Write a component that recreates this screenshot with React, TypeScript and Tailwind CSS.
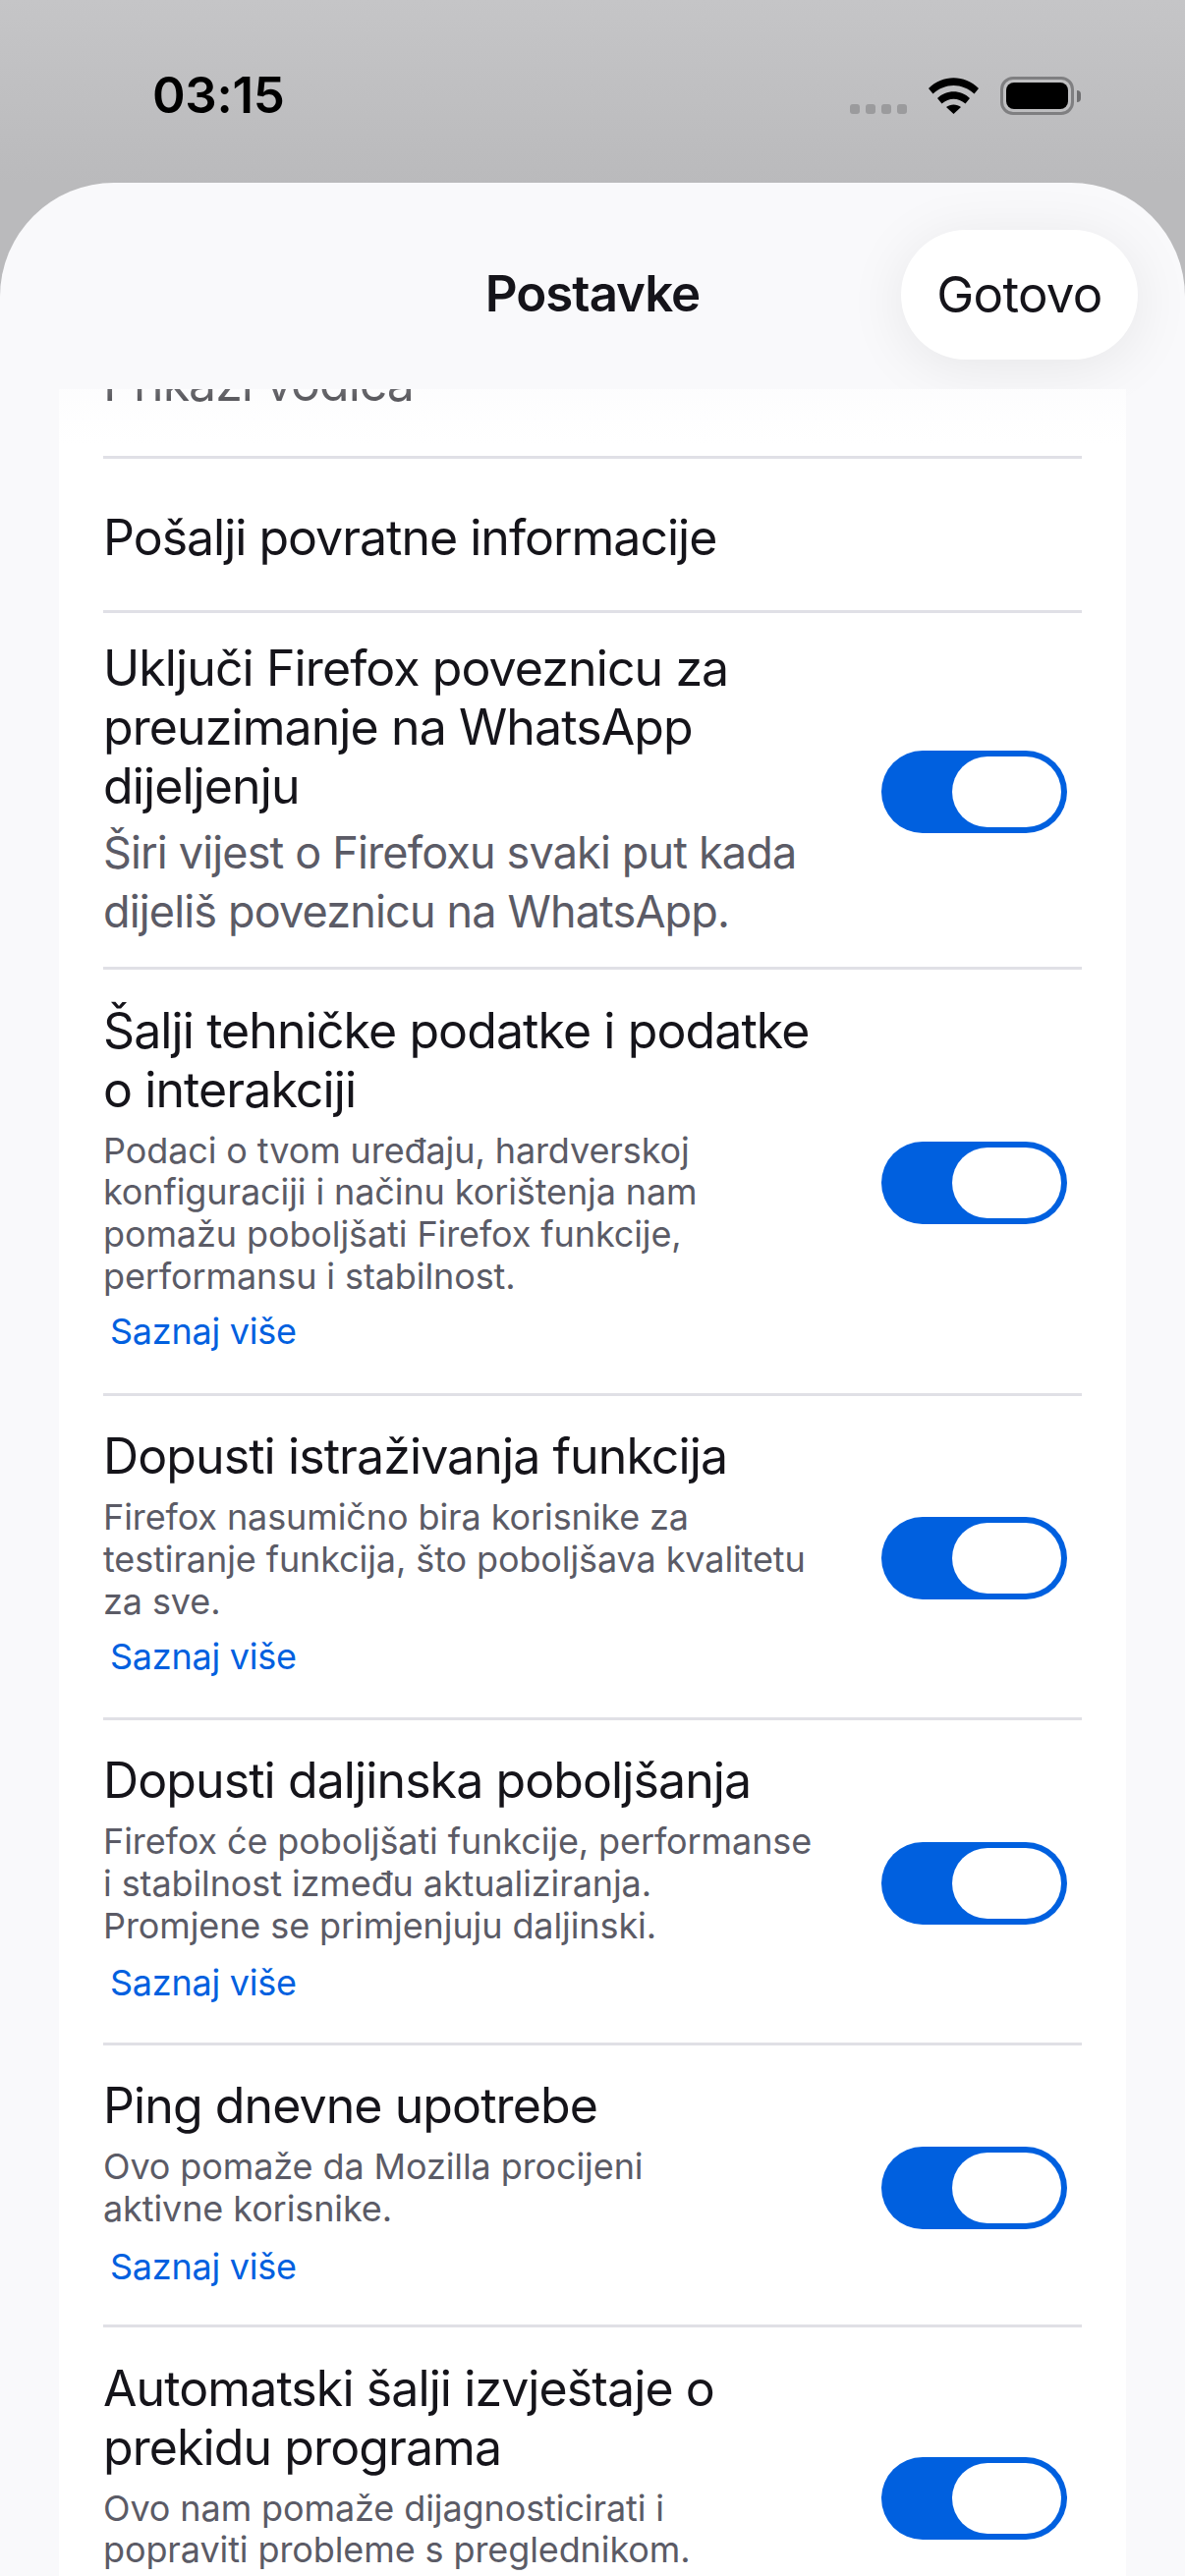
const rows = [
  {
    title: ["Uključi Firefox poveznicu za", "preuzimanje na WhatsApp", "dijeljenju"],
    large: ["Širi vijest o Firefoxu svaki put kada", "dijeliš poveznicu na WhatsApp."],
    pad: "pt-[26px] pb-[26px]",
    linkGap: "",
  },
  {
    title: ["Šalji tehničke podatke i podatke", "o interakciji"],
    sub: ["Podaci o tvom uređaju, hardverskoj", "konfiguraciji i načinu korištenja nam", "pomažu poboljšati Firefox funkcije,", "performansu i stabilnost."],
    pad: "pt-[32px] pb-[33px]",
    linkGap: "mt-[5px]",
  },
  {
    title: ["Dopusti istraživanja funkcija"],
    sub: ["Firefox nasumično bira korisnike za", "testiranje funkcija, što poboljšava kvalitetu", "za sve."],
    pad: "pt-[31px] pb-[32px]",
    linkGap: "mt-[5px]",
  },
  {
    title: ["Dopusti daljinska poboljšanja"],
    sub: ["Firefox će poboljšati funkcije, performanse", "i stabilnost između aktualiziranja.", "Promjene se primjenjuju daljinski."],
    pad: "pt-[31px] pb-[31px]",
    linkGap: "mt-[7px]",
  },
  {
    title: ["Ping dnevne upotrebe"],
    sub: ["Ovo pomaže da Mozilla procijeni", "aktivne korisnike."],
    pad: "pt-[31px] pb-[29px]",
    linkGap: "mt-[7px]",
  },
  {
    title: ["Automatski šalji izvještaje o", "prekidu programa"],
    sub: ["Ovo nam pomaže dijagnosticirati i", "popraviti probleme s preglednikom."],
    pad: "pt-[32px] pb-[34px]",
    linkGap: "mt-[5px]",
  },
];

function Lines({ lines, className }: { lines: string[]; className: string }) {
  return (
    <div className={className}>
      {lines.map((l) => (
        <div key={l} className="whitespace-nowrap">{l}</div>
      ))}
    </div>
  );
}

function Toggle() {
  return (
    <div className="mt-[4px] flex h-[84px] w-[189px] shrink-0 items-center justify-end rounded-full bg-[#0060df] pr-[6px]">
      <div className="h-[72px] w-[111px] rounded-full bg-white" />
    </div>
  );
}

function Row({ row, last }: { row: (typeof rows)[number]; last: boolean }) {
  return (
    <div className="mx-[45px] flex flex-col">
      <div className={`flex items-center justify-between pr-[15px] ${row.pad}`}>
        <div className="flex flex-col">
          <Lines lines={row.title} className="text-[50px] leading-[60px] tracking-[-0.9px] text-[#15141a]" />
          {row.large && <Lines lines={row.large} className="mt-[8px] text-[45px] leading-[60px] tracking-[-0.85px] text-[#5b5b66]" />}
          {row.sub && <Lines lines={row.sub} className="mt-[11px] text-[36px] leading-[42.67px] tracking-[-0.1px] text-[#5b5b66]" />}
          {row.sub && <div className={`${row.linkGap} pl-[7px] text-[36px] leading-[60px] tracking-[-0.25px] text-[#0060df]`}>Saznaj više</div>}
        </div>
        <Toggle />
      </div>
      {!last && <div className="h-[3px] bg-[#e0e0e6]" />}
    </div>
  );
}

export default function App() {
  return (
    <div className="flex h-[2622px] w-[1206px] flex-col overflow-hidden bg-[#bababc] font-['Inter','Liberation_Sans',sans-serif]">
      <div className="relative flex h-[186px] shrink-0 items-start justify-between bg-gradient-to-b from-[#c5c5c7] to-[#bababc] pl-[155px] pr-[106px] pt-[68px]">
        <div className="text-[51px] font-semibold leading-[58px] tracking-[-0.3px] text-black">03:15</div>
        <div className="flex items-start gap-[22px] pt-[10px]">
          <div className="mt-[28px] flex gap-[6px]">
            {[0, 1, 2, 3].map((i) => (
              <div key={i} className="h-[10px] w-[10px] rounded-[3px] bg-[#9b9b9d]" />
            ))}
          </div>
          <svg width="51" height="37" viewBox="0 0 51 37" className="mt-px">
            <path d="M0 11 C14 -3.5 37 -3.5 51 11 L46.5 16.5 C34 5 17 5 4.5 16.5 Z" fill="#000" />
            <path d="M9 21 C18 12 33 12 42 21 L37.5 26.5 C30 20 21 20 13.5 26.5 Z" fill="#000" />
            <path d="M18 30 C22 26.5 29 26.5 33 30 L25.5 37 Z" fill="#000" />
          </svg>
          <div className="flex items-center">
            <div className="flex h-[39px] w-[75px] items-center justify-center rounded-[13px] border-[3px] border-[#7f7f81]">
              <div className="h-[27px] w-[63px] rounded-[8px] bg-black" />
            </div>
            <div className="ml-[3px] h-[12px] w-[4px] rounded-r-full bg-[#6f6f71]" />
          </div>
        </div>
      </div>

      <div className="relative flex flex-1 flex-col overflow-hidden rounded-t-[116px] bg-[#f9f9fb]">
        <div className="relative flex h-[210px] shrink-0 items-center justify-center">
          <div className="mt-[16px] text-[51px] font-semibold leading-[60px] tracking-[-1px] text-[#15141a]">Postavke</div>
          <div className="absolute right-[48px] top-[48px] flex h-[132px] w-[241px] items-center justify-center rounded-full bg-white text-[51px] leading-[60px] tracking-[-0.7px] text-[#15141a] shadow-[0_8px_60px_rgba(0,0,0,0.08)]">
            Gotovo
          </div>
        </div>
        <div className="relative flex-1 overflow-hidden">
          <div className="mx-[60px] mt-[-86px] bg-white">
            <div className="mx-[45px]">
              <div className="h-[153.5px] pt-[50px] text-[50px] leading-[60px] tracking-[-1px] text-[#15141a]">Prikaži vodiča</div>
              <div className="h-[3px] bg-[#e0e0e6]" />
            </div>
            <div className="mx-[45px]">
              <div className="flex h-[154px] items-center pt-[6px] text-[50px] leading-[60px] tracking-[-1px] text-[#15141a]">Pošalji povratne informacije</div>
              <div className="h-[3px] bg-[#e0e0e6]" />
            </div>
            {rows.map((r, i) => (
              <Row key={r.title[0]} row={r} last={i === rows.length - 1} />
            ))}
          </div>
          <div className="absolute inset-x-0 top-0 h-[56px] bg-gradient-to-b from-[#f9f9fb60] to-[#f9f9fb00]" />
        </div>
      </div>
    </div>
  );
}
